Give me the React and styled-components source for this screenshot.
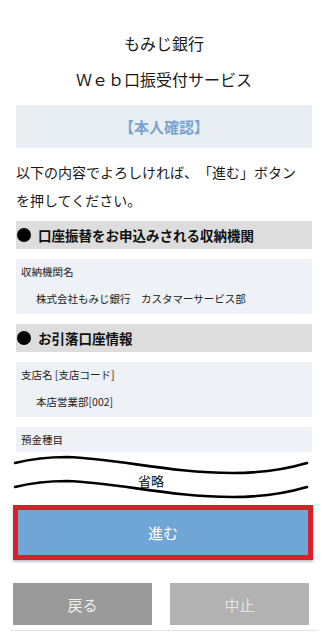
import React from "react";
import styled, { createGlobalStyle } from "styled-components";

const GlobalStyle = createGlobalStyle`
	body {
		margin: 0;
		background: #fff;
		font-family: "Noto Sans CJK JP", "Noto Sans", sans-serif;
		color: #222;
		text-spacing-trim: space-all;
	}
`;

const Page = styled.div`
	width: 328px;
	min-height: 634px;
	box-sizing: border-box;
	padding: 25px 16px 0;
`;

const Title = styled.h1`
	margin: 0;
	font-size: 16px;
	font-weight: 400;
	line-height: 36px;
	text-align: center;
	color: #1a1a1a;
`;

const Caption = styled.div`
	margin-top: 8px;
	height: 43px;
	display: flex;
	align-items: center;
	justify-content: center;
	background: #e9eef3;
	color: #76a3d0;
	font-size: 15px;
	font-weight: 700;
`;

const Lead = styled.p`
	margin: 10px 0 7px;
	padding-right: 4px;
	font-size: 14px;
	line-height: 28px;
	color: #1a1a1a;
`;

const Sections = styled.div`
	display: flex;
	flex-direction: column;
	gap: 10px;
`;

const SectionHead = styled.div`
	display: flex;
	align-items: center;
	height: 28px;
	background: #dddddd;
	font-size: 13.5px;
	font-weight: 700;
	color: #111;
`;

const Bullet = styled.span`
	width: 14px;
	height: 14px;
	border-radius: 50%;
	background: #000;
	margin: 0 7px 0 1px;
	flex: none;
`;

const InfoBox = styled.div`
	background: #eef1f5;
	padding-left: 5px;
`;

const Label = styled.div`
	font-size: 10.5px;
	line-height: 25px;
	color: #222;
`;

const Value = styled.div`
	font-size: 10.5px;
	line-height: 30px;
	padding-left: 15px;
	color: #222;
`;

const Omitted = styled.div`
	position: relative;
	height: 50px;
	margin: 0 -16px;
`;

const OmitText = styled.span`
	position: absolute;
	left: 138px;
	top: 20px;
	font-size: 13px;
	line-height: 18px;
	color: #111;
`;

const Buttons = styled.div`
	margin: 3px -1px 0 -3px;
	display: flex;
	flex-direction: column;
	gap: 23px;
`;

const NextButton = styled.button`
	height: 55px;
	width: 100%;
	border: 5px solid #da1f2c;
	background: #6fa6d6;
	color: #fff;
	font-family: inherit;
	font-size: 15px;
	box-shadow: 0 2px 2px rgba(80, 80, 120, 0.35);
	cursor: pointer;
`;

const SubRow = styled.div`
	display: grid;
	grid-template-columns: 139px 139px;
	gap: 18px;
`;

const SubButton = styled.button`
	height: 42px;
	border: none;
	background: ${(p) => (p.$light ? "#b2b2b2" : "#9a9a9a")};
	color: ${(p) => (p.$light ? "#e4e4e4" : "#efefef")};
	font-family: inherit;
	font-size: 15px;
	cursor: pointer;
`;

const BottomEdge = styled.div`
	margin: 5px -6px 0;
	height: 1px;
	background: #e4e4e4;
`;

const Wave = ({ y }) => (
	<path
		d={`M15 ${y} C35 ${y - 5}, 50 ${y - 6}, 67 ${y - 6} C120 ${y - 4}, 170 ${y + 10}, 233 ${y + 10} C265 ${y + 10}, 290 ${y + 5}, 307 ${y}`}
		fill="none"
		stroke="#000"
		strokeWidth="2.6"
		strokeLinecap="round"
	/>
);

const App = () => {
	return (
		<Page>
			<GlobalStyle />
			<Title>
				もみじ銀行
				<br />
				Ｗｅｂ口振受付サービス
			</Title>
			<Caption>【本人確認】</Caption>
			<Lead>以下の内容でよろしければ、「進む」ボタンを押してください。</Lead>

			<Sections>
				<SectionHead>
					<Bullet />
					口座振替をお申込みされる収納機関
				</SectionHead>
				<InfoBox>
					<Label>収納機関名</Label>
					<Value>株式会社もみじ銀行　カスタマーサービス部</Value>
				</InfoBox>

				<SectionHead>
					<Bullet />
					お引落口座情報
				</SectionHead>
				<InfoBox>
					<Label>支店名 [支店コード]</Label>
					<Value>本店営業部[002]</Value>
				</InfoBox>
				<InfoBox>
					<Label>預金種目</Label>
				</InfoBox>
			</Sections>

			<Omitted>
				<svg width="328" height="50" viewBox="0 0 328 50">
					<Wave y={11} />
					<Wave y={35} />
				</svg>
				<OmitText>省略</OmitText>
			</Omitted>

			<Buttons>
				<NextButton>進む</NextButton>
				<SubRow>
					<SubButton>戻る</SubButton>
					<SubButton $light>中止</SubButton>
				</SubRow>
			</Buttons>
			<BottomEdge />
		</Page>
	);
};

export default App;
